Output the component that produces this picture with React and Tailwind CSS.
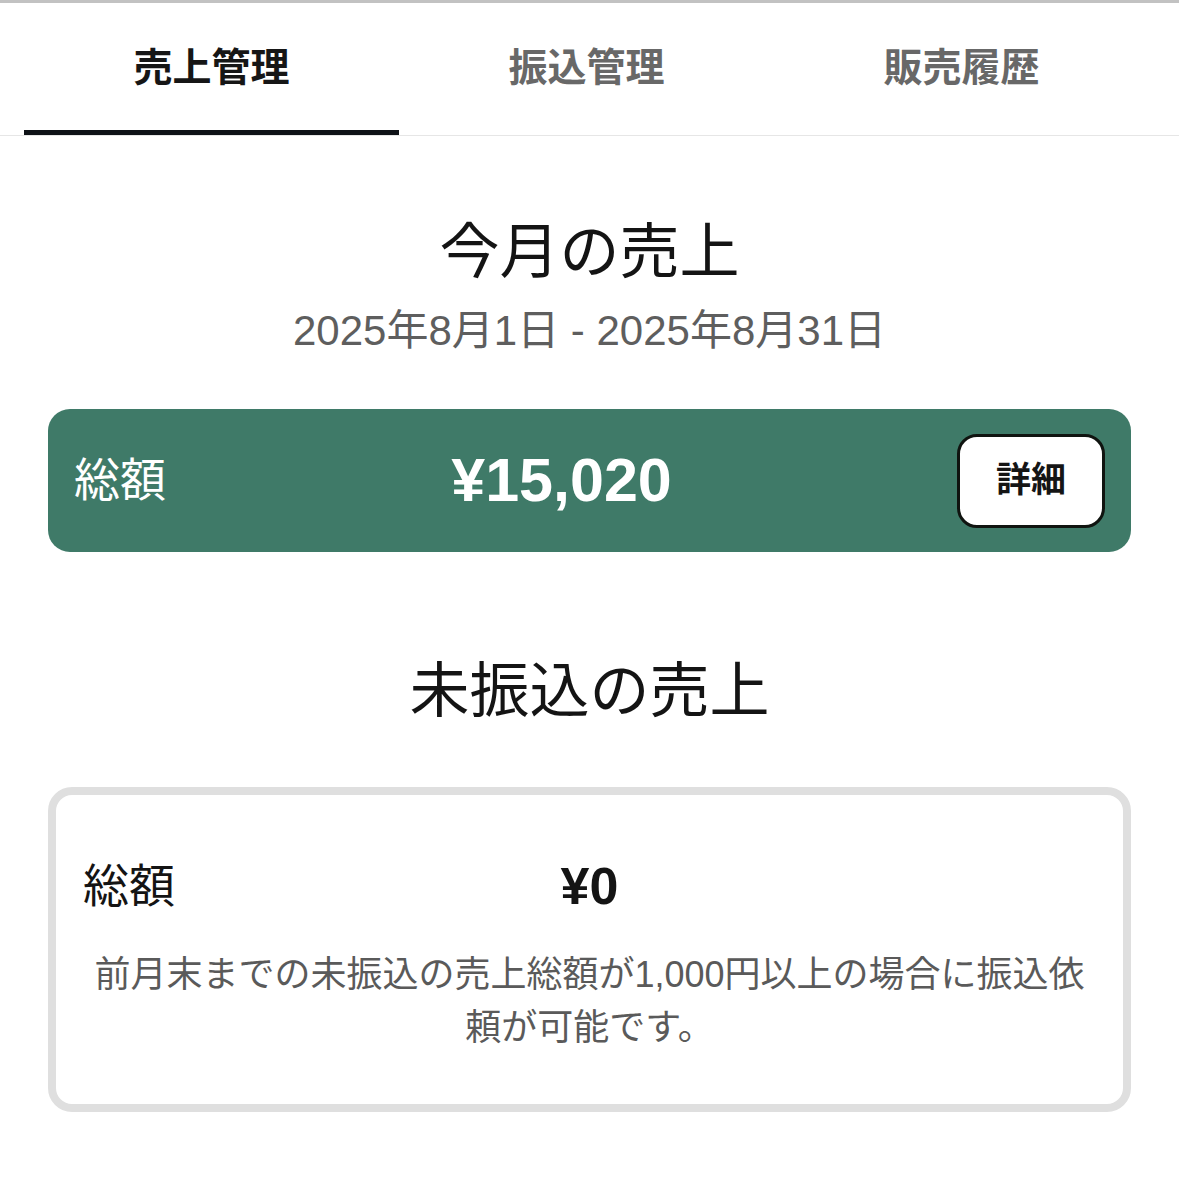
import React, { useState } from 'react';

const tabs = ['売上管理', '振込管理', '販売履歴'];

const App = () => {
  const [active, setActive] = useState(0);

  return (
    <div className="min-h-[1179px] bg-white font-['Liberation_Sans','Noto_Sans_CJK_JP',sans-serif]">
      <div className="h-[3px] bg-[#c2c2c2]" />

      {/* Tabs */}
      <div className="flex pl-[24px] pr-[30px] border-b border-[#e6e6e6]">
        {tabs.map((t, i) => (
          <button
            key={t}
            onClick={() => setActive(i)}
            className={`flex-1 h-[132px] flex items-center justify-center border-b-[5px] pt-[4px] text-[39px] font-bold ${
              active === i ? 'border-[#0e1217] text-[#161616]' : 'border-transparent text-[#686868]'
            }`}
          >
            {t}
          </button>
        ))}
      </div>

      <div className="px-[48px] flex flex-col">
        {/* 今月の売上 */}
        <h2 className="mt-[82px] text-center text-[60px] leading-[70px] text-[#141414]">今月の売上</h2>
        <p className="mt-[19px] text-center text-[42px] leading-[48px] text-[#5e5e5e]">2025年8月1日 - 2025年8月31日</p>

        <div className="mt-[54px] h-[143px] rounded-[22px] bg-[#3f7a68] flex items-center justify-between px-[26px]">
          <span className="text-[46px] text-white">総額</span>
          <span className="text-[61px] font-bold text-white">¥15,020</span>
          <button className="w-[148px] h-[94px] rounded-[20px] border-[3px] border-[#101410] bg-white text-[35px] font-bold text-[#151515]">
            詳細
          </button>
        </div>

        {/* 未振込の売上 */}
        <h2 className="mt-[105px] text-center text-[60px] leading-[70px] text-[#141414]">未振込の売上</h2>

        <div className="mt-[60px] rounded-[24px] border-[8px] border-[#dfdfdf] px-[27px] pt-[52px] pb-[50px]">
          <div className="grid grid-cols-[1fr_auto_1fr] items-center h-[56px]">
            <span className="text-[46px] text-[#141414]">総額</span>
            <span className="text-[52px] font-bold text-[#141414]">¥0</span>
            <span />
          </div>
          <p className="mt-[45px] text-center text-[36px] leading-[53px] text-[#5a5a5a]">
            前月末までの未振込の売上総額が1,000円以上の場合に振込依頼が可能です。
          </p>
        </div>
      </div>
    </div>
  );
};

export default App;
